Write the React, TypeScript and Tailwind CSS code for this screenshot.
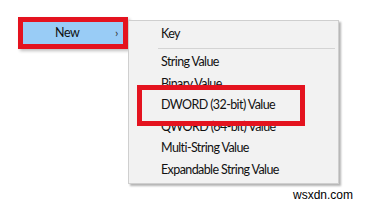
import React from "react";

const items = [
  "String Value",
  "Binary Value",
  "DWORD (32-bit) Value",
  "QWORD (64-bit) Value",
  "Multi-String Value",
  "Expandable String Value",
];

export default function App() {
  return (
    <div
      className="relative w-[365px] h-[207px] bg-white overflow-hidden text-[#111]"
      style={{ fontFamily: 'Lato, "Open Sans", sans-serif' }}
    >
      <div className="flex items-start pl-[18px] pt-[17px]">
        {/* highlighted "New" item with red annotation */}
        <div className="w-[110px] h-[32px] border-[5px] border-[#e4131f] bg-[#99ccf6] shadow-[2px_2px_3px_rgba(0,0,0,0.25)] flex items-center text-[12.5px] tracking-[-0.4px]">
          <span className="ml-[32px]">New</span>
          <span className="ml-auto mr-[5px] text-[12px] leading-none text-[#333]">›</span>
        </div>

        {/* submenu */}
        <div className="relative mt-[3px] w-[211px] h-[164px] bg-[#f2f2f2] border border-[#cfcfcf] shadow-[2px_2px_2px_rgba(0,0,0,0.3)] pt-[2px] text-[12.5px] tracking-[-0.6px]">
          <div className="h-[22px] flex items-center pl-[32px]">Key</div>
          <div className="h-[7px] flex items-center pl-[29px] pr-[3px]">
            <div className="h-px w-full bg-[#d4d4d4]" />
          </div>
          {items.map((t) => (
            <div key={t} className="h-[21.5px] flex items-center pl-[32px]">
              {t}
            </div>
          ))}

          {/* red annotation around DWORD */}
          <div className="absolute left-[8px] top-[64px] w-[168px] h-[41px] border-[5px] border-[#e4131f]" />
        </div>
      </div>

      <div
        className="absolute right-[12px] bottom-[3px] text-[12px] text-black"
        style={{ fontFamily: '"Liberation Sans", Arial, sans-serif' }}
      >
        wsxdn.com
      </div>
    </div>
  );
}
